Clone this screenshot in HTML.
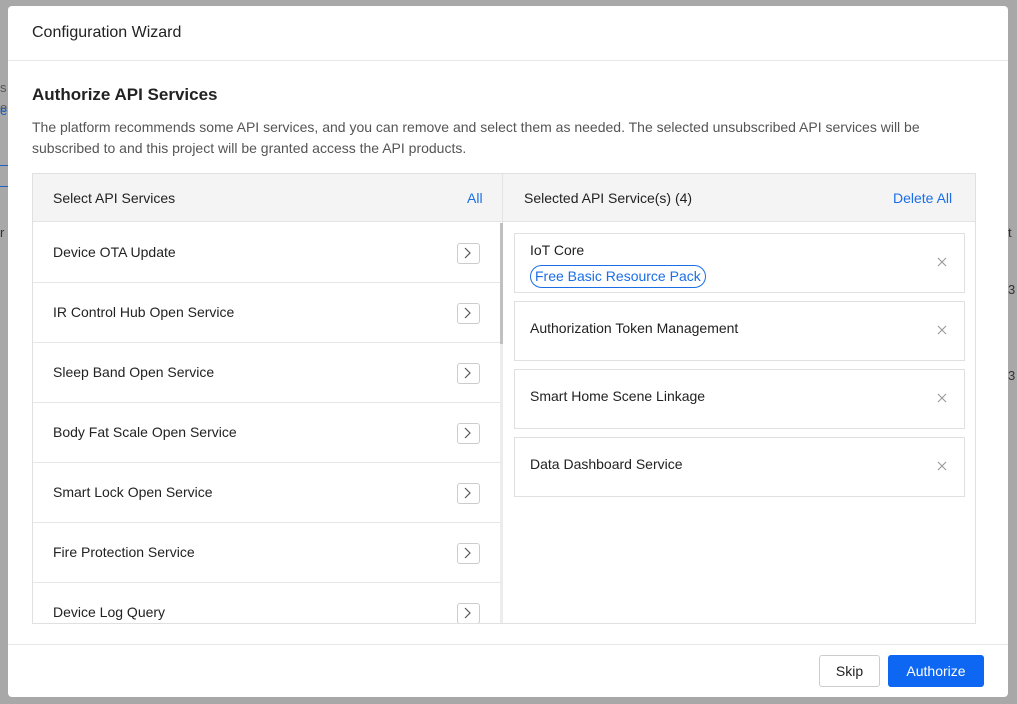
<!DOCTYPE html>
<html><head><meta charset="utf-8"><style>
*{box-sizing:border-box;margin:0;padding:0}
body{width:1017px;height:704px;background:#a8a8a8;font-family:"Liberation Sans",sans-serif;position:relative;overflow:hidden;color:#222}
.a{position:absolute}
.modal{left:8px;top:6px;width:1000px;height:691px;background:#fff;border-radius:4px}
.t{font-size:14px;color:#222;white-space:nowrap}
.row{left:33px;width:467px;height:60px;border-bottom:1px solid #e6e6e6}
.row span{position:absolute;left:20px;top:21px;font-size:14px;color:#222}
.btn{position:absolute;left:424px;top:20px;width:23px;height:21px;border:1px solid #ccc;border-radius:3px;background:#fff}
.card{left:514px;width:451px;height:60px;border:1px solid #e0e0e0}
.card span.n{position:absolute;left:15px;top:8px;font-size:14px}
.x{position:absolute;right:16px;top:22px;width:12px;height:12px}
</style></head><body>
<div class="a" style="left:0;top:80px;font-size:13px;color:#555">s</div>
<div class="a" style="left:0;top:100px;font-size:13px;color:#555">e</div>
<div class="a" style="left:0;top:103px;font-size:13px;color:#1a5fc4;top:103px">e</div>
<div class="a" style="left:0;top:165px;width:8px;height:22px;border-top:1px solid #1a5fc4;border-bottom:1px solid #1a5fc4"></div>
<div class="a" style="left:0;top:225px;font-size:13px;color:#333">r</div>
<div class="a" style="left:1008px;top:225px;font-size:13px;color:#333">t</div>
<div class="a" style="left:1008px;top:282px;font-size:13px;color:#333">3</div>
<div class="a" style="left:1008px;top:368px;font-size:13px;color:#333">3</div>
<div class="a modal"></div>
<div class="a t" style="left:32px;top:24px;font-size:16px">Configuration Wizard</div>
<div class="a" style="left:8px;top:60px;width:1000px;height:1px;background:#e8e8e8"></div>
<div class="a t" style="left:32px;top:85px;font-size:17px;font-weight:bold;color:#222">Authorize API Services</div>
<div class="a" style="left:32px;top:117px;width:945px;font-size:14px;line-height:21px;color:#555">The platform recommends some API services, and you can remove and select them as needed. The selected unsubscribed API services will be subscribed to and this project will be granted access the API products.</div>
<div class="a" style="left:32px;top:173px;width:944px;height:451px;border:1px solid #e0e0e0"></div>
<div class="a" style="left:33px;top:174px;width:942px;height:48px;background:#f4f4f4;border-bottom:1px solid #e3e3e3"></div>
<div class="a" style="left:502px;top:174px;width:1px;height:449px;background:#e3e3e3"></div>
<div class="a t" style="left:53px;top:190px">Select API Services</div>
<div class="a t" style="left:467px;top:190px;color:#1a6fe8">All</div>
<div class="a t" style="left:524px;top:190px">Selected API Service(s) (4)</div>
<div class="a t" style="left:893px;top:190px;color:#1a6fe8">Delete All</div>
<div class="a" style="left:33px;top:223px;width:467px;height:400px;overflow:hidden">
<div class="a row" style="left:0;top:0"><span>Device OTA Update</span><div class="btn"></div></div>
<div class="a row" style="left:0;top:60px"><span>IR Control Hub Open Service</span><div class="btn"></div></div>
<div class="a row" style="left:0;top:120px"><span>Sleep Band Open Service</span><div class="btn"></div></div>
<div class="a row" style="left:0;top:180px"><span>Body Fat Scale Open Service</span><div class="btn"></div></div>
<div class="a row" style="left:0;top:240px"><span>Smart Lock Open Service</span><div class="btn"></div></div>
<div class="a row" style="left:0;top:300px"><span>Fire Protection Service</span><div class="btn"></div></div>
<div class="a row" style="left:0;top:360px"><span>Device Log Query</span><div class="btn"></div></div>
</div>
<svg class="a" style="left:0;top:0" width="1017" height="704">
<g fill="none" stroke="#555" stroke-width="1.2">
<path d="M465 248l5 5-5 5"/><path d="M465 308l5 5-5 5"/><path d="M465 368l5 5-5 5"/><path d="M465 428l5 5-5 5"/><path d="M465 488l5 5-5 5"/><path d="M465 548l5 5-5 5"/><path d="M465 608l5 5-5 5"/>
</g>
<g stroke="#999" stroke-width="1.1">
<path d="M938 258l8 8M946 258l-8 8"/><path d="M938 326l8 8M946 326l-8 8"/><path d="M938 394l8 8M946 394l-8 8"/><path d="M938 462l8 8M946 462l-8 8"/>
</g>
</svg>
<div class="a" style="left:500px;top:223px;width:3px;height:400px;background:#ececec"></div>
<div class="a" style="left:500px;top:223px;width:3px;height:121px;background:#c0c0c0"></div>
<div class="a card" style="top:233px"><span class="n">IoT Core</span>
<div class="a" style="left:15px;top:31px;height:23px;padding:0 4px;border:1px solid #1a6fe8;border-radius:12px;color:#1a6fe8;font-size:14px;line-height:21px;white-space:nowrap">Free Basic Resource Pack</div></div>
<div class="a card" style="top:301px"><span class="n" style="top:18px">Authorization Token Management</span></div>
<div class="a card" style="top:369px"><span class="n" style="top:18px">Smart Home Scene Linkage</span></div>
<div class="a card" style="top:437px"><span class="n" style="top:18px">Data Dashboard Service</span></div>
<div class="a" style="left:8px;top:644px;width:1000px;height:1px;background:#e8e8e8"></div>
<div class="a" style="left:819px;top:655px;width:61px;height:32px;border:1px solid #ccc;border-radius:3px;font-size:14px;text-align:center;line-height:30px">Skip</div>
<div class="a" style="left:888px;top:655px;width:96px;height:32px;background:#0d67f2;border-radius:3px;font-size:14px;color:#fff;text-align:center;line-height:32px">Authorize</div>
</body></html>
